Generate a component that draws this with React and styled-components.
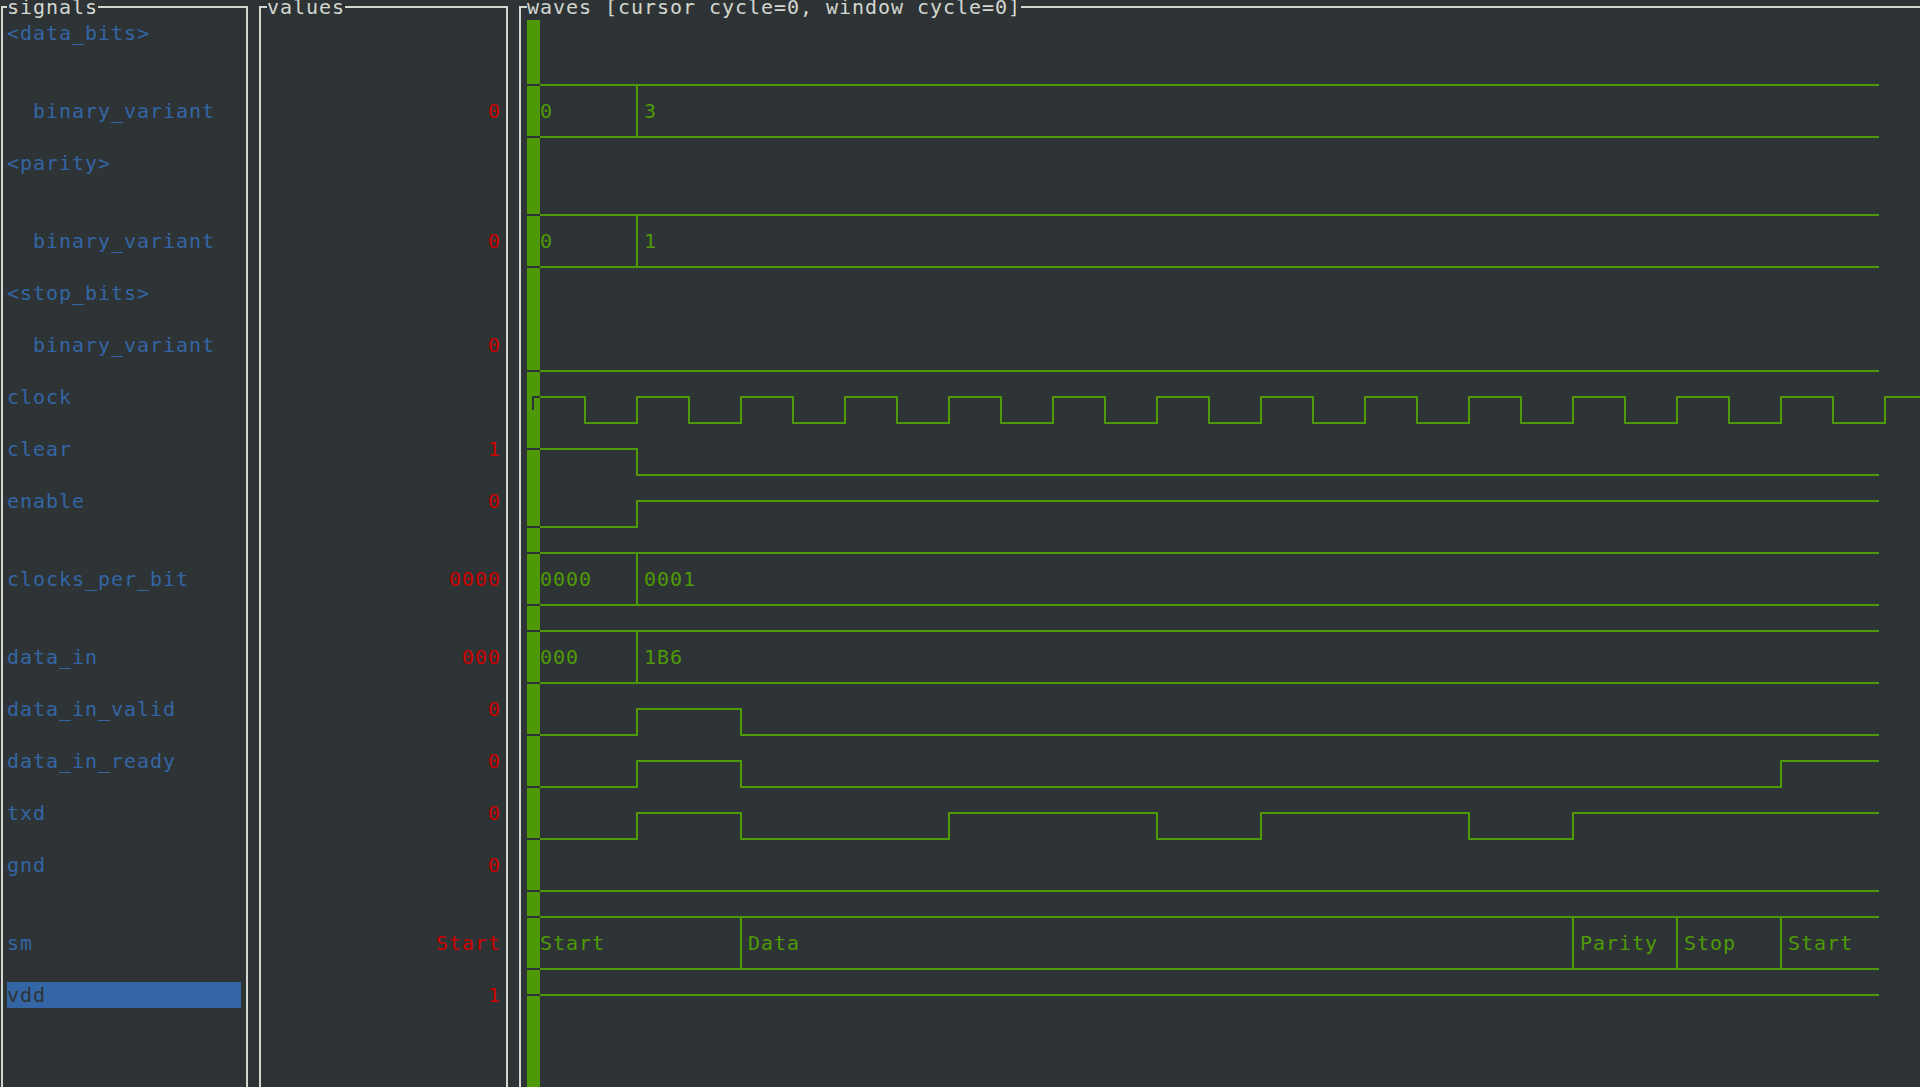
import React from 'react';
import styled, { createGlobalStyle } from 'styled-components';

// tango-ish terminal palette
const BG = '#2e3436';
const FG = '#d3d7cf';
const BLUE = '#3465a4';
const RED = '#cc0000';
const GREEN = '#4e9a06';

const CELL_W = 13;
const ROW_H = 26;
const CURSOR_COL = 41;
const LAST_COL = 144;

const GlobalStyle = createGlobalStyle`
  html, body {
    margin: 0;
    padding: 0;
    background: ${BG};
    overflow: hidden;
  }
  body {
    font-family: "DejaVu Sans Mono", "Liberation Mono", monospace;
    font-size: 20px;
    letter-spacing: 0.96px;
  }
`;

const Screen = styled.div`
  display: flex;
  align-items: stretch;
  height: 1087px;
  padding-left: 1px;
  overflow: hidden;
`;

const Panel = styled.section`
  box-sizing: border-box;
  flex: 0 0 ${p => p.$width}px;
  margin-top: 6px;
  margin-left: ${p => p.$gap || 0}px;
  border: 2px solid ${FG};
  border-bottom: none;
  display: flex;
  flex-direction: column;
`;

const Title = styled.div`
  align-self: flex-start;
  margin: -14px 0 0 ${p => p.$indent}px;
  height: ${ROW_H}px;
  line-height: ${ROW_H}px;
  color: ${FG};
  background: ${BG};
  white-space: pre;
`;

const SignalRow = styled.div`
  box-sizing: border-box;
  width: 234px;
  height: ${ROW_H}px;
  line-height: ${ROW_H}px;
  margin: ${p => p.$skip * ROW_H}px 0 0 4px;
  padding-left: ${p => (p.$indent ? 26 : 0)}px;
  color: ${p => (p.$selected ? BG : BLUE)};
  background: ${p => (p.$selected ? BLUE : 'transparent')};
  white-space: pre;
`;

const ValueRow = styled.div`
  height: ${ROW_H}px;
  line-height: ${ROW_H}px;
  margin-top: ${p => p.$skip * ROW_H}px;
  padding-right: 5px;
  text-align: right;
  color: ${RED};
  white-space: pre;
`;

const WaveCanvas = styled.svg`
  display: block;
  margin-left: 6px;
  overflow: hidden;
`;

const BusLabel = styled.text`
  font-family: "DejaVu Sans Mono", "Liberation Mono", monospace;
  font-size: 20px;
  letter-spacing: 0.96px;
  fill: ${GREEN};
`;

const signals = [
  { name: '<data_bits>', row: 1 },
  { name: 'binary_variant', row: 4, indent: true, value: '0' },
  { name: '<parity>', row: 6 },
  { name: 'binary_variant', row: 9, indent: true, value: '0' },
  { name: '<stop_bits>', row: 11 },
  { name: 'binary_variant', row: 13, indent: true, value: '0' },
  { name: 'clock', row: 15 },
  { name: 'clear', row: 17, value: '1' },
  { name: 'enable', row: 19, value: '0' },
  { name: 'clocks_per_bit', row: 22, value: '0000' },
  { name: 'data_in', row: 25, value: '000' },
  { name: 'data_in_valid', row: 27, value: '0' },
  { name: 'data_in_ready', row: 29, value: '0' },
  { name: 'txd', row: 31, value: '0' },
  { name: 'gnd', row: 33, value: '0' },
  { name: 'sm', row: 36, value: 'Start' },
  { name: 'vdd', row: 38, value: '1', selected: true },
];

const withSkip = signals.map((s, i) => ({
  ...s,
  skip: s.row - (i === 0 ? 0 : signals[i - 1].row) - 1,
}));

const clockEdges = [];
for (let c = 45; c <= 150; c += 4) clockEdges.push(c);

const digital = [
  { row: 13, high: false, edges: [] },
  { row: 15, high: true, edges: clockEdges, endCol: 152, corner: true },
  { row: 17, high: true, edges: [49] },
  { row: 19, high: false, edges: [49] },
  { row: 27, high: false, edges: [49, 57] },
  { row: 29, high: false, edges: [49, 57, 137] },
  { row: 31, high: false, edges: [49, 57, 73, 89, 97, 113, 121] },
  { row: 33, high: false, edges: [] },
  { row: 38, high: true, edges: [] },
];

const buses = [
  { top: 3, segs: [[41, '0'], [49, '3']] },
  { top: 8, segs: [[41, '0'], [49, '1']] },
  { top: 21, segs: [[41, '0000'], [49, '0001']] },
  { top: 24, segs: [[41, '000'], [49, '1B6']] },
  { top: 35, segs: [[41, 'Start'], [57, 'Data'], [121, 'Parity'], [129, 'Stop'], [137, 'Start']] },
];

const colLeft = col => (col - CURSOR_COL) * CELL_W;
const colMid = col => (col - CURSOR_COL) * CELL_W + 6;
const rowMid = row => (row - 1) * ROW_H + 13;

function digitalPath(sig) {
  const hiY = rowMid(sig.row);
  const loY = rowMid(sig.row + 1);
  let level = sig.high;
  let d = `M${colLeft(CURSOR_COL + 1)} ${level ? hiY : loY}`;
  sig.edges.forEach(e => {
    d += ` H${colMid(e)}`;
    level = !level;
    d += ` V${level ? hiY : loY}`;
  });
  d += ` H${colLeft((sig.endCol || LAST_COL) + 1)}`;
  return d;
}

const Waves = () => {
  const end = colLeft(LAST_COL + 1);
  const cursorMarks = [];
  digital.forEach(s => {
    if (!s.corner) cursorMarks.push(s.high ? s.row : s.row + 1);
  });
  buses.forEach(b => cursorMarks.push(b.top, b.top + 2));
  const clockY = rowMid(15);

  return (
    <WaveCanvas width="1400" height="1067" viewBox="0 0 1400 1067">
      <rect x="0" y="0" width={CELL_W} height="1067" fill={GREEN} />
      {cursorMarks.map(r => (
        <rect key={r} x="0" y={rowMid(r) - 1} width={CELL_W} height="2" fill={BG} />
      ))}
      <path d={`M6 ${clockY} H${CELL_W} M6 ${clockY - 1} V${clockY + 13}`} stroke={BG} strokeWidth="2" fill="none" />

      {digital.map(s => (
        <path key={s.row} d={digitalPath(s)} stroke={GREEN} strokeWidth="2" fill="none" />
      ))}

      {buses.map(b => {
        const top = rowMid(b.top);
        const bottom = rowMid(b.top + 2);
        return (
          <g key={b.top}>
            <path
              d={`M${colLeft(CURSOR_COL + 1)} ${top} H${end} M${colLeft(CURSOR_COL + 1)} ${bottom} H${end}`}
              stroke={GREEN}
              strokeWidth="2"
              fill="none"
            />
            {b.segs.map(([at, label]) => (
              <g key={at}>
                {at > CURSOR_COL && (
                  <path d={`M${colMid(at)} ${top} V${bottom}`} stroke={GREEN} strokeWidth="2" fill="none" />
                )}
                <BusLabel x={colLeft(at + 1)} y={rowMid(b.top + 1) + 7}>{label}</BusLabel>
              </g>
            ))}
          </g>
        );
      })}
    </WaveCanvas>
  );
};

const App = () => {
  return (
    <>
      <GlobalStyle />
      <Screen>
        <Panel $width={247}>
          <Title $indent={4}>signals</Title>
          {withSkip.map((s, i) => (
            <SignalRow key={i} $skip={s.skip} $indent={s.indent} $selected={s.selected}>
              {s.name}
            </SignalRow>
          ))}
        </Panel>
        <Panel $width={249} $gap={11}>
          <Title $indent={6}>values</Title>
          {withSkip.map((s, i) => (
            <ValueRow key={i} $skip={s.skip}>{s.value || ''}</ValueRow>
          ))}
        </Panel>
        <Panel $width={1500} $gap={11}>
          <Title $indent={6}>waves [cursor cycle=0, window cycle=0]</Title>
          <Waves />
        </Panel>
      </Screen>
    </>
  );
};

export default App;
